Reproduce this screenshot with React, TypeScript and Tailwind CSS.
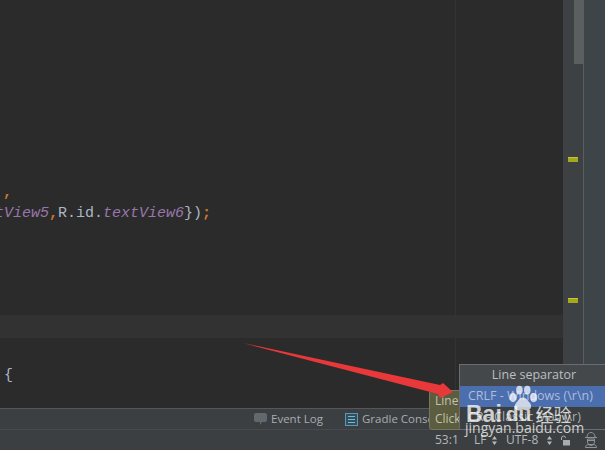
import React from "react";

const ui = "font-['Open_Sans','Noto_Sans',sans-serif]";

function Paw() {
    return (
        <svg width="30" height="28" viewBox="0 0 42 38" fill="#ffffff" fillOpacity="0.72">
            <ellipse cx="7" cy="17" rx="5" ry="6.5" />
            <ellipse cx="16" cy="6.5" rx="4.6" ry="6.2" />
            <ellipse cx="27" cy="6.5" rx="4.6" ry="6.2" />
            <ellipse cx="36" cy="17" rx="4.8" ry="6.5" />
            <path d="M21 17c5 0 7 5 10 8 3 4 1 10-5 10-2 0-3-1-5-1s-3 1-6 1c-6 0-7-6-4-10 3-3 5-8 10-8z" />
        </svg>
    );
}

function UpDown() {
    return (
        <svg width="5" height="9" viewBox="0 0 5 9" fill="#b4b8ba" className="ml-[4px] shrink-0">
            <path d="M2.5 0L5 3.5H0zM2.5 9L0 5.5h5z" />
        </svg>
    );
}

function Watermark() {
    return (
        <div className="absolute left-[465px] top-[385px] w-[110px] h-[50px] text-white/75 pointer-events-none">
            <div className="absolute left-[43px] top-0"><Paw /></div>
            <div className="absolute left-[1px] top-[17px] flex items-center text-[23px] leading-[24px] font-bold font-['Liberation_Sans',sans-serif]">
                <span>Bai</span>
                <span className="ml-[4px] text-[21px]">du</span>
                <span className="ml-[4px] text-[18px] font-['Noto_Sans_CJK_SC',sans-serif] font-normal">经验</span>
            </div>
            <div className="absolute left-0 top-[36px] text-[14px] leading-[14px] font-['Open_Sans',sans-serif] whitespace-nowrap">jingyan.baidu.com</div>
        </div>
    );
}

function Arrow() {
    return (
        <svg className="absolute left-[240px] top-[340px]" width="220" height="65" viewBox="0 0 220 65">
            <path d="M3 3L200 45L203 43L213 52L200 58L198 54Z" fill="#e8383a" />
        </svg>
    );
}

function Popup() {
    return (
        <div className={`absolute left-[459px] top-[364px] w-[146px] h-[66px] bg-[#3c3f41] border border-[#6b6e70] border-r-0 text-[12.5px] text-[#a9b0b3] whitespace-nowrap ${ui}`}>
            <div className="h-[21px] flex items-center justify-center bg-[#45484a] text-[12.5px] text-[#bbbfc1] pl-[3px] pb-px">Line separator</div>
            <div className="h-[21px] flex items-center bg-[#4b6eaf] pl-[8px] text-[#aebdd8]">CRLF - Windows (\r\n)</div>
            <div className="h-[21px] flex items-center pl-[8px]">CR - Classic Mac (\r)</div>
        </div>
    );
}

export default function App() {
    return (
        <div className="relative w-[605px] h-[450px] overflow-hidden bg-[#3c3f41]">
            <div className="flex h-[408px]">
                <div className="relative w-[563px] overflow-hidden bg-[#2b2b2b] font-['Liberation_Mono',monospace] text-[15px] leading-[20px]">
                    <div className="absolute left-[455px] top-0 bottom-0 w-px bg-[#333333]" />
                    <div className="h-[183px]" />
                    <div className="h-[21px] text-[#cc7832] pl-[3px] font-bold">,</div>
                    <div className="h-[20px] whitespace-nowrap ml-[-5px]">
                        <span className="text-[#9876aa] italic">tView5</span>
                        <span className="text-[#cc7832] font-bold">,</span>
                        <span className="text-[#a9b7c6]">R.id.</span>
                        <span className="text-[#9876aa] italic">textView6</span>
                        <span className="text-[#a9b7c6]">{"})"}</span>
                        <span className="text-[#cc7832] font-bold">;</span>
                    </div>
                    <div className="h-[91px]" />
                    <div className="h-[23px] bg-[#323232]" />
                    <div className="h-[28px]" />
                    <div className="h-[20px] text-[#a9b7c6] pl-[4px]">{"{"}</div>
                </div>
                <div className="relative w-[21px] bg-[#3d4144] border-r border-[#5a5e60]">
                    <div className="absolute left-[11px] top-0 w-[9px] h-[64px] bg-[#5c5f60]" />
                    <div className="absolute left-[5px] top-[157px] w-[10px] h-[5px] bg-[#a6a81c] border-t border-[#c4c63a]" />
                    <div className="absolute left-[5px] top-[298px] w-[10px] h-[5px] bg-[#a6a81c] border-t border-[#c4c63a]" />
                </div>
                <div className="flex-1 bg-[#3d4548]" />
            </div>
            <div className={`h-[22px] flex items-center pl-[254px] border-t border-[#55585a] border-b border-b-[#474b4d] text-[11.5px] text-[#a9adb0] whitespace-nowrap ${ui}`}>
                <svg width="13" height="12" viewBox="0 0 13 12" className="mr-[4px] shrink-0">
                    <path d="M2 0h9a2 2 0 0 1 2 2v5a2 2 0 0 1-2 2H8l-2 3V9H2a2 2 0 0 1-2-2V2a2 2 0 0 1 2-2z" fill="#62686b" />
                </svg>
                <span className="w-[74px]">Event Log</span>
                <svg width="13" height="13" viewBox="0 0 13 13" className="mr-[4px] shrink-0">
                    <rect x="0.5" y="0.5" width="12" height="12" fill="#30505f" stroke="#5d97b3" />
                    <path d="M3 3.5h7M3 6.5h7M3 9.5h7" stroke="#7fb4cc" />
                </svg>
                <span>Gradle Console</span>
            </div>
            <div className={`h-[20px] flex items-center text-[12px] text-[#b4b8ba] pl-[435px] whitespace-nowrap ${ui}`}>
                <span className="w-[39px]">53:1</span>
                <span className="w-[14px]">LF</span>
                <UpDown />
                <span className="ml-[9px] w-[37px]">UTF-8</span>
                <UpDown />
                <svg width="11" height="11" viewBox="0 0 11 11" className="ml-[8px] shrink-0" fill="none" stroke="#a8acae">
                    <path d="M1.5 5V3a2 2 0 0 1 4 0" />
                    <rect x="3.5" y="5.5" width="6" height="4.5" fill="#a8acae" />
                </svg>
                <svg width="14" height="16" viewBox="0 0 14 16" className="ml-[13px] shrink-0" fill="none" stroke="#8f9496">
                    <path d="M3 5c0-6 8-6 8 0M1 5.5h12M3.5 7h7v3a3.5 3.5 0 0 1-7 0zM3.5 8.5h7M1.5 15.5c0-2 1.5-3 3.5-3h4c2 0 3.5 1 3.5 3z" />
                </svg>
            </div>
            <div className={`absolute left-[429px] top-[390px] w-[40px] h-[40px] bg-[#5c5c3e] border border-[#77775a] rounded-[3px] text-[12px] leading-[18px] text-[#c2c2b0] pl-[5px] pt-px ${ui}`}>
                <div>Line</div>
                <div>Click</div>
            </div>
            <Arrow />
            <Popup />
            <Watermark />
        </div>
    );
}
